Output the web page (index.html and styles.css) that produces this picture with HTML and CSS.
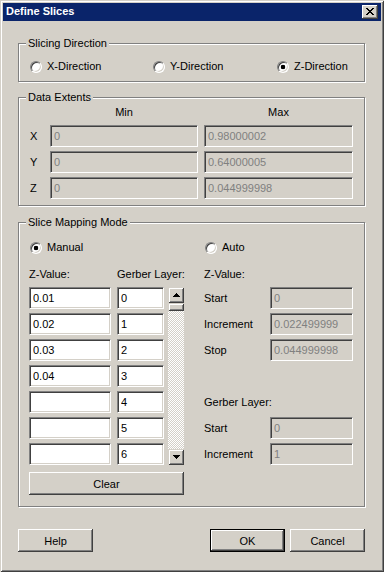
FILE: index.html
```html
<!DOCTYPE html>
<html lang="en">

<head>
    <meta charset="UTF-8">
    <meta name="viewport" content="width=device-width, initial-scale=1.0">
    <title>Define Slices</title>
    <link rel="stylesheet" href="styles.css">
</head>

<body>
    <div class="window">
        <!-- Barra de título -->
        <div class="titlebar">
            <span class="title">Define Slices</span>
            <button class="close-btn" aria-label="Close">
                <svg width="8" height="7" viewBox="0 0 8 7">
                    <path d="M0 0h2v1H0zM6 0h2v1H6zM1 1h2v1H1zM5 1h2v1H5zM2 2h4v1H2zM3 3h2v1H3zM2 4h4v1H2zM1 5h2v1H1zM5 5h2v1H5zM0 6h2v1H0zM6 6h2v1H6z" />
                </svg>
            </button>
        </div>

        <div class="content">
            <!-- Slicing Direction -->
            <div class="group direction">
                <span class="group-title">Slicing Direction</span>
                <label class="radio"><input type="radio" name="dir">X-Direction</label>
                <label class="radio"><input type="radio" name="dir">Y-Direction</label>
                <label class="radio"><input type="radio" name="dir" checked>Z-Direction</label>
            </div>

            <!-- Data Extents -->
            <div class="group extents">
                <span class="group-title">Data Extents</span>
                <div class="extents-grid">
                    <span></span>
                    <span class="col-head">Min</span>
                    <span class="col-head">Max</span>

                    <span>X</span>
                    <input class="field" value="0" disabled>
                    <input class="field" value="0.98000002" disabled>

                    <span>Y</span>
                    <input class="field" value="0" disabled>
                    <input class="field" value="0.64000005" disabled>

                    <span>Z</span>
                    <input class="field" value="0" disabled>
                    <input class="field" value="0.044999998" disabled>
                </div>
            </div>

            <!-- Slice Mapping Mode -->
            <div class="group mapping">
                <span class="group-title">Slice Mapping Mode</span>

                <div class="map-col">
                    <label class="radio"><input type="radio" name="mode" checked>Manual</label>
                    <div class="slice-head">
                        <span>Z-Value:</span>
                        <span>Gerber Layer:</span>
                    </div>
                    <div class="slice-list">
                        <div class="scrollbar">
                            <div class="sb-btn">
                                <svg width="7" height="4" viewBox="0 0 7 4"><path d="M3 0h1v1h1v1h1v1h1v1H0V3h1V2h1V1h1z" /></svg>
                            </div>
                            <div class="sb-thumb"></div>
                            <div class="sb-btn sb-down">
                                <svg width="7" height="4" viewBox="0 0 7 4"><path d="M0 0h7v1H6v1H5v1H4v1H3V3H2V2H1V1H0z" /></svg>
                            </div>
                        </div>
                        <input class="field z-field" value="0.01">
                        <input class="field layer-field" value="0">
                        <input class="field z-field" value="0.02">
                        <input class="field layer-field" value="1">
                        <input class="field z-field" value="0.03">
                        <input class="field layer-field" value="2">
                        <input class="field z-field" value="0.04">
                        <input class="field layer-field" value="3">
                        <input class="field z-field" value="">
                        <input class="field layer-field" value="4">
                        <input class="field z-field" value="">
                        <input class="field layer-field" value="5">
                        <input class="field z-field" value="">
                        <input class="field layer-field" value="6">
                    </div>
                    <button class="btn clear-btn">Clear</button>
                </div>

                <div class="map-col">
                    <label class="radio"><input type="radio" name="mode">Auto</label>
                    <div class="auto-head">Z-Value:</div>
                    <div class="auto-grid">
                        <span>Start</span>
                        <input class="field" value="0" disabled>
                        <span>Increment</span>
                        <input class="field" value="0.022499999" disabled>
                        <span>Stop</span>
                        <input class="field" value="0.044999998" disabled>
                        <span class="span-all"></span>
                        <span class="span-all">Gerber Layer:</span>
                        <span>Start</span>
                        <input class="field" value="0" disabled>
                        <span>Increment</span>
                        <input class="field" value="1" disabled>
                    </div>
                </div>
            </div>

            <!-- Botões -->
            <div class="actions">
                <button class="btn">Help</button>
                <div class="actions-right">
                    <button class="btn default">OK</button>
                    <button class="btn">Cancel</button>
                </div>
            </div>
        </div>
    </div>
</body>

</html>
```

FILE: styles.css
```css
/* Base */
body {
    margin: 0;
    background: #d4d0c8;
    font-family: "Liberation Sans", Arial, sans-serif;
    font-size: 11px;
    color: #000;
}

/* Janela */
.window {
    width: 384px;
    height: 572px;
    box-sizing: border-box;
    padding: 3px;
    background: #d4d0c8;
    box-shadow: inset 1px 1px #d4d0c8, inset -1px -1px #404040, inset 2px 2px #fff, inset -2px -2px #808080;
}

.titlebar {
    height: 18px;
    background: #0a246a;
    color: #fff;
    font-weight: bold;
    display: flex;
    align-items: center;
    justify-content: space-between;
    padding: 0 3px 0 3px;
}

.title {
    line-height: 16px;
    margin-bottom: 2px;
}

.close-btn {
    width: 16px;
    height: 14px;
    padding: 0;
    border: none;
    background: #d4d0c8;
    box-shadow: inset -1px -1px #404040, inset 1px 1px #fff, inset -2px -2px #808080;
    display: flex;
    align-items: center;
    justify-content: center;
}

.close-btn svg {
    margin: 0 1px 1px 0;
}

.content {
    padding: 22px 16px 0 15px;
}

/* Caixas de grupo */
.group {
    position: relative;
    box-sizing: border-box;
    border: 1px solid #808080;
    box-shadow: inset 1px 1px #fff, 1px 1px #fff;
}

.group-title {
    position: absolute;
    top: -7px;
    left: 7px;
    padding: 0 2px;
    line-height: 13px;
    background: #d4d0c8;
}

.direction {
    height: 39px;
    padding: 16px 0 8px 11px;
    display: grid;
    grid-template-columns: 123px 124px auto;
}

.extents {
    height: 109px;
    margin-top: 15px;
    padding: 8px 11px 0 11px;
}

.mapping {
    height: 285px;
    margin-top: 16px;
    padding: 18px 0 11px 10px;
    display: grid;
    grid-template-columns: 155px 149px;
    column-gap: 20px;
}

/* Rádio */
.radio {
    display: flex;
    align-items: center;
    gap: 5px;
    line-height: 13px;
    height: 13px;
    white-space: nowrap;
}

.radio input {
    appearance: none;
    width: 12px;
    height: 12px;
    margin: 0;
    box-sizing: border-box;
    border-radius: 50%;
    border: 1px solid;
    border-color: #808080 #fff #fff #808080;
    box-shadow: inset 1px 1px #404040, inset -1px -1px #d4d0c8;
    background: #fff;
}

.radio input:checked {
    background: radial-gradient(circle, #000 0 2px, #fff 2.6px);
}

.mapping .radio {
    margin-left: 1px;
}

/* Campos */
.field {
    box-sizing: border-box;
    height: 22px;
    width: 100%;
    margin: 0;
    padding: 0 3px;
    font: inherit;
    color: #000;
    background: #fff;
    border: 1px solid;
    border-color: #808080 #fff #fff #808080;
    box-shadow: inset 1px 1px #404040, inset -1px -1px #d4d0c8;
    outline: none;
}

.field:disabled {
    color: #808080;
    background: #d4d0c8;
}

/* Data Extents */
.extents-grid {
    display: grid;
    grid-template-columns: 14px 148px 149px;
    grid-template-rows: 15px 22px 22px 22px;
    column-gap: 6px;
    row-gap: 4px;
    align-items: center;
    line-height: 13px;
}

.col-head {
    text-align: center;
    align-self: start;
}

/* Slice Mapping */
.map-col {
    display: flex;
    flex-direction: column;
}

.slice-head {
    display: grid;
    grid-template-columns: 88px auto;
    margin-top: 14px;
    line-height: 13px;
    white-space: nowrap;
}

.slice-list {
    display: grid;
    grid-template-columns: 88px 51px 16px;
    grid-template-rows: repeat(7, 22px);
    row-gap: 4px;
    margin-top: 6px;
}

.z-field {
    width: 82px;
}

.layer-field {
    width: 47px;
}

.scrollbar {
    grid-column: 3;
    grid-row: 1 / 8;
    display: flex;
    flex-direction: column;
    background: repeating-conic-gradient(#fff 0 25%, #d4d0c8 0 50%) 0 0 / 2px 2px;
}

.sb-btn,
.sb-thumb {
    background: #d4d0c8;
    box-shadow: inset 1px 1px #d4d0c8, inset -1px -1px #404040, inset 2px 2px #fff, inset -2px -2px #808080;
}

.sb-btn {
    height: 16px;
    display: flex;
    align-items: center;
    justify-content: center;
}

.sb-thumb {
    height: 8px;
}

.sb-down {
    margin-top: auto;
}

.auto-head {
    margin-top: 14px;
    line-height: 13px;
}

.auto-grid {
    display: grid;
    grid-template-columns: 66px 83px;
    grid-template-rows: repeat(7, 22px);
    row-gap: 4px;
    margin-top: 6px;
    align-items: center;
}

.span-all {
    grid-column: 1 / 3;
}

/* Botões */
.btn {
    width: 75px;
    height: 23px;
    padding: 0;
    font: inherit;
    color: #000;
    background: #d4d0c8;
    border: none;
    box-shadow: inset -1px -1px #404040, inset 1px 1px #fff, inset -2px -2px #808080;
}

.btn.default {
    border: 1px solid #000;
    box-shadow: inset -1px -1px #404040, inset 1px 1px #fff, inset -2px -2px #808080;
}

.clear-btn {
    width: 155px;
    margin-top: 7px;
}

.actions {
    display: flex;
    justify-content: space-between;
    margin-top: 22px;
}

.actions-right {
    display: flex;
    gap: 5px;
}
```
